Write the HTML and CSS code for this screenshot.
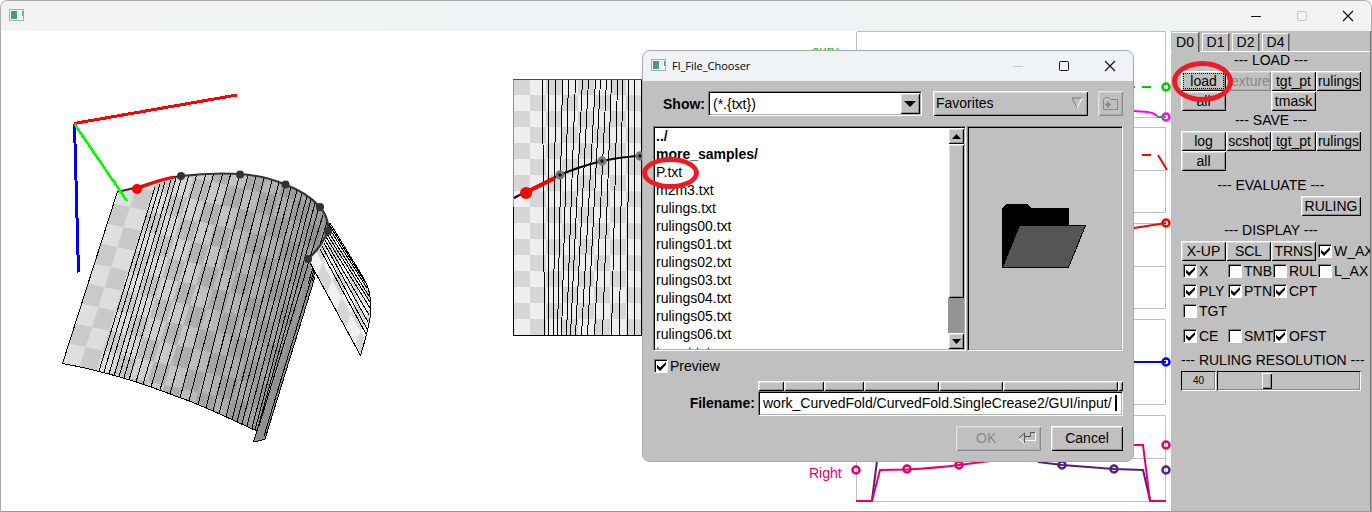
FILE: index.html
```html
<!DOCTYPE html>
<html lang="en">
<head>
<meta charset="utf-8">
<title>Curved Fold</title>
<link rel="stylesheet" href="styles.css">
</head>
<body>
<div class="window">
  <header class="titlebar">
    <svg class="app-icon" width="15" height="12" viewBox="0 0 15 12"><defs><linearGradient id="ic" x2="1" y2="1"><stop offset="0" stop-color="#4a86a8"/><stop offset="1" stop-color="#4ba57c"/></linearGradient></defs><rect width="15" height="12" fill="#a9acaf"/><rect x="1" y="1" width="13" height="10" fill="#fff"/><rect x="2" y="2" width="6" height="8" fill="url(#ic)"/><rect x="9" y="2" width="3" height="8" fill="#eceef0"/><rect x="13" y="2" width="1" height="5" fill="#4a9a8c"/></svg>
    <div class="window-controls">
      <button class="control" aria-label="Minimize"><svg width="12" height="12" viewBox="0 0 12 12"><path d="M1 6.5h10" stroke="#111"/></svg></button>
      <button class="control" aria-label="Maximize" disabled><svg width="12" height="12" viewBox="0 0 12 12"><rect x="1.5" y="1.5" width="9" height="9" rx="1" fill="none" stroke="#c4c6c7"/></svg></button>
      <button class="control" aria-label="Close"><svg width="12" height="12" viewBox="0 0 12 12"><path d="M1 1l10 10M11 1L1 11" stroke="#111" stroke-width="1.2"/></svg></button>
    </div>
  </header>

  <div class="workspace">
    <main class="canvas">
      <svg class="scene" viewBox="1 31 1170 480" preserveAspectRatio="xMinYMin meet">
        <defs>
          <linearGradient id="shade" gradientUnits="userSpaceOnUse" x1="90" y1="270" x2="290" y2="330">
            <stop offset="0" stop-color="#cacaca"/><stop offset=".22" stop-color="#c8c8c8"/><stop offset=".5" stop-color="#b0b0b0"/><stop offset=".85" stop-color="#999"/><stop offset="1" stop-color="#909090"/>
          </linearGradient>
          <linearGradient id="fade" gradientUnits="userSpaceOnUse" x1="90" y1="270" x2="290" y2="330">
            <stop offset="0" stop-color="#fff"/><stop offset=".5" stop-color="#aaa"/><stop offset="1" stop-color="#333"/>
          </linearGradient>
          <mask id="fade-mask" maskUnits="userSpaceOnUse" x="50" y="160" width="290" height="290"><rect x="50" y="160" width="290" height="290" fill="url(#fade)"/></mask>
          <pattern id="skew-check" width="2" height="2" patternUnits="userSpaceOnUse" patternTransform="matrix(17 3.6 -6.3 20 62.5 363.5)"><path d="M0 1h1v1h-1zM1 0h1v1h-1z" fill="#fff" fill-opacity=".42"/></pattern>
          <pattern id="wing-check" width="2" height="2" patternUnits="userSpaceOnUse" patternTransform="matrix(5 -13 9.5 17 308 259)"><path d="M0 0h1v1h-1zM1 1h1v1h-1z" fill="#f1f1f1"/></pattern>
          <pattern id="check" width="32" height="32" patternUnits="userSpaceOnUse" x="514" y="79"><path d="M16 0h16v16h-16zM0 16h16v16h-16z" fill="#eee"/></pattern>
        </defs>

        <!-- folded sheet -->
        <g stroke-linejoin="round" shape-rendering="crispEdges">
          <path d="M117.5 191.5C135 190 160 178 181 176C205 173 225 173 240 174C255 175 272 179 285 184.500C300 190 313 199 320 207C326 214 329 222 328 231C323 243 316 252 308 259L315 277L265 439L262 440L253.500 442L257 431C230 419 200 404 178 397C150 386 110 372 62.500 363.500Z" fill="url(#shade)"/>
          <path d="M117.5 191.5C135 190 160 178 181 176C205 173 225 173 240 174C255 175 272 179 285 184.500C300 190 313 199 320 207L328 231L308 259L313 275L257 431C230 419 200 404 178 397C150 386 110 372 62.500 363.500Z" fill="url(#skew-check)" mask="url(#fade-mask)"/>
          <path d="M117.500 191.500L62.500 363.500C110 372 150 386 178 397C200 404 230 419 257 431L253.500 442L262 440L265 439L315 277M155 187L99 371M160 184L104 372M165 182L109 374M171 180L114 376M176 178L119 377M182 176L124 378M189 175L129 380M197 174L136 382M206 174L143 384M214 173L151 387M223 173L160 390M231 173L170 394M240 174L180 398M248 175L189 401M256 176L198 405M264 178L206 408M272 180L213 411M279 182L219 414M285 185L226 417M291 187L232 420M297 190L237 422M302 193L242 424M307 196L247 426M311 199L252 428M315 203L255 430M319 207L257 431M323 215L259 426M327 222L308 284M328 231L312 281M314 270L264 436" fill="none" stroke="#000"/>
          <path d="M308 259C316 252 323 243 328 231L330 223L363 277C368 285 371 296 371 309C370 326 365 340 360.500 355.500Z" fill="#d5d5d5"/>
          <path d="M308 259C316 252 323 243 328 231L330 223L363 277C368 285 371 296 371 309C370 326 365 340 360.500 355.500Z" fill="url(#wing-check)" stroke="#000"/>
          <path d="M320 249L366 334M322 246L367 329M324 243L368 322M325 240L369 315M326 237L370 308M327 234L370 302M328 231L369 296M329 228L367 288M330 226L365 282" stroke="#000" fill="none"/>
        </g>
        <path d="M117.500 191.500C135 190 160 178 181 176C205 173 225 173 240 174C255 175 272 179 285 184.500C300 190 313 199 320 207C326 214 329 222 328 231C323 243 316 252 308 259" fill="none" stroke="#333" stroke-width="2"/>
        <path d="M137 189Q155 181 174 177" fill="none" stroke="#f00" stroke-width="3"/>
        <g fill="#333"><circle cx="181" cy="176" r="4"/><circle cx="240" cy="174.500" r="4"/><circle cx="285.500" cy="184.500" r="4"/><circle cx="320" cy="207" r="4"/><circle cx="328" cy="231" r="4"/><circle cx="308" cy="259" r="4"/></g>
        <circle cx="137" cy="189" r="5" fill="#f00"/>
        <g fill="none" stroke-width="3" shape-rendering="crispEdges"><path d="M74 123.500L237 95" stroke="#f00"/><path d="M74.500 124L78.500 272.500" stroke="#00f"/><path d="M74.500 124L127 201" stroke="#0f0" stroke-width="2.500"/></g>

        <!-- crease pattern -->
        <g shape-rendering="crispEdges">
          <rect x="513" y="79" width="132" height="256" fill="#d6d6d6"/><rect x="513" y="79" width="132" height="256" fill="url(#check)"/>
          <path d="M542.500 80L544.500 335M548.500 80V335M555.500 80L553.500 335M562.500 80L557.500 335M568.500 80L561.500 335M575.500 80L566.500 335M582.500 80L570.500 335M588.500 80L575.500 335M595.500 80L581.500 335M600.500 80L587.500 335M606.500 80L594.500 335M611.500 80L602.500 335M617.500 80L611.500 335M622.500 80L619.500 335M628.500 80L627.500 335M634.500 80V335M641.500 80V335" fill="none" stroke="#000"/>
          <path d="M513.500 207V335.500H645" fill="none" stroke="#000"/><path d="M513.500 207V79" stroke="#0f0"/><path d="M513 79.500H645" stroke="#f00"/>
        </g>
        <path d="M514 198Q540 184 560 175Q578 167 602 161Q620 157 643 155.500" fill="none" stroke="#000" stroke-width="2"/>
        <path d="M526 192.500L555 178" stroke="#f00" stroke-width="4"/>
        <g fill="#111" stroke="#777" stroke-width="3"><circle cx="560" cy="175" r="3.200"/><circle cx="602" cy="161" r="3.200"/><circle cx="640" cy="156" r="3.200"/></g>
        <circle cx="526" cy="193" r="6" fill="#f00"/><circle cx="526" cy="193" r="1" fill="#700"/>

        <!-- curvature and angle graphs -->
        <g fill="none" stroke="#c0c0c0" shape-rendering="crispEdges">
          <path d="M856.500 31.500H1165.500V117M856.500 117H1166M856.500 31.500V117" /><path d="M856.500 127.500H1165.500V212.500H856.500ZM856 170.500H1166M856.500 223.500H1165.500V308.500H856.500ZM856 266.500H1166M856.500 319.500H1165.500V404.500H856.500ZM856.500 415.500H1165.500V501.500H856.500ZM856 458.500H1166"/>
        </g>
        <g fill="none" stroke-width="2">
          <path d="M1133 87H1135M1142 87H1151" stroke="#00c800"/><circle cx="1166" cy="87" r="3.500" stroke="#00c800" stroke-width="2.500"/>
          <path d="M1134 111L1148 112Q1154 113 1157 116" stroke="#f0f"/><circle cx="1166" cy="117" r="3.500" stroke="#f0f" stroke-width="2.500"/><path d="M1157 117H1166" stroke="#00c800"/>
          <path d="M1142 155H1151M1158 155L1167 170M1134 228L1166 223" stroke="#f00"/><circle cx="1166" cy="223" r="3.500" stroke="#f00" stroke-width="2.500"/>
          <path d="M1134 362H1166" stroke="#00f"/><circle cx="1166" cy="362" r="3.500" stroke="#00f" stroke-width="2.500"/>
          <g stroke="#551e7e"><path d="M872 500L877 461M1038 462L1062 465L1114 469L1143 470L1150 500"/><g stroke-width="2.500"><circle cx="1062" cy="465" r="3.500"/><circle cx="1114" cy="469" r="3.500"/><circle cx="1166" cy="470" r="3.500"/></g></g>
          <g stroke="#e6006e"><path d="M856 501H872L880 470L907 469.500Q935 468 959 465L990 461M1134 445H1143L1150 501H1166"/><g stroke-width="2.500"><circle cx="856" cy="470" r="3.500"/><circle cx="907" cy="469" r="3.500"/><circle cx="959" cy="465" r="3.500"/><circle cx="1166" cy="445" r="3.500"/></g></g>
        </g>
        <text class="graph-label" x="812" y="56" fill="#00c800">curv</text>
        <text class="graph-label" x="809" y="478" fill="#e6006e">Right</text>
      </svg>

      <section class="dialog" role="dialog" aria-label="Fl_File_Chooser">
        <header class="titlebar dialog-titlebar">
          <svg class="app-icon" width="15" height="12" viewBox="0 0 15 12"><rect width="15" height="12" fill="#a9acaf"/><rect x="1" y="1" width="13" height="10" fill="#fff"/><rect x="2" y="2" width="6" height="8" fill="url(#ic)"/><rect x="9" y="2" width="3" height="8" fill="#eceef0"/><rect x="13" y="2" width="1" height="5" fill="#4a9a8c"/></svg>
          <h1 class="dialog-title">Fl_File_Chooser</h1>
          <div class="window-controls">
            <button class="control" aria-label="Minimize" disabled><svg width="12" height="12" viewBox="0 0 12 12"><path d="M1 6.500h10" stroke="#c4c6c7"/></svg></button>
            <button class="control" aria-label="Maximize"><svg width="12" height="12" viewBox="0 0 12 12"><rect x="1.500" y="1.500" width="9" height="9" rx="1" fill="none" stroke="#111"/></svg></button>
            <button class="control" aria-label="Close"><svg width="12" height="12" viewBox="0 0 12 12"><path d="M1 1l10 10M11 1L1 11" stroke="#111" stroke-width="1.200"/></svg></button>
          </div>
        </header>
        <form class="chooser">
          <div class="filter-row">
            <label class="field-label show-label" for="show">Show:</label>
            <div class="select-box sunken">
              <select id="show" class="select"><option>(*.{txt})</option></select>
              <span class="select-arrow raised"><svg width="12" height="6" viewBox="0 0 12 6"><path d="M0 0h12L6 6z"/></svg></span>
            </div>
            <button type="button" class="raised favorites">Favorites <svg width="12" height="12" viewBox="0 0 12 12" fill="none"><path d="M6 11L1 1H11" stroke="#777"/><path d="M11 1L6 11" stroke="#fff"/></svg></button>
            <button type="button" class="raised inactive new-folder" aria-label="New folder" disabled><svg width="17" height="15" viewBox="0 0 17 15" fill="none" stroke="#888"><path d="M1.500 3.500L3.500 1.500H6.500L8.500 3.500H15.500V13.500H1.500Z"/><path d="M3 8.500H9M6 5.500V11.500" stroke-width="2"/></svg></button>
          </div>
          <div class="browser-row">
            <div class="browser sunken">
              <ul class="files">
                <li class="folder">../</li><li class="folder">more_samples/</li><li>P.txt</li><li>m2m3.txt</li><li>rulings.txt</li><li>rulings00.txt</li><li>rulings01.txt</li><li>rulings02.txt</li><li>rulings03.txt</li><li>rulings04.txt</li><li>rulings05.txt</li><li>rulings06.txt</li><li>target.txt</li>
              </ul>
              <div class="scrollbar">
                <button type="button" class="raised scroll-step" aria-label="Scroll up"><svg width="9" height="5" viewBox="0 0 9 5"><path d="M0 5h9L4.500 0z"/></svg></button>
                <div class="raised scroll-thumb"></div>
                <div class="scroll-space"></div>
                <button type="button" class="raised scroll-step" aria-label="Scroll down"><svg width="9" height="5" viewBox="0 0 9 5"><path d="M0 0h9L4.500 5z"/></svg></button>
              </div>
            </div>
            <div class="preview sunken">
              <svg width="84" height="64" viewBox="0 0 84 64" shape-rendering="crispEdges"><path d="M0 64V4L4 0H26L29 4H67V22H50V63Z"/><path d="M17.500 21.500H83.500L66.500 63.500H0.500Z" fill="#555" stroke="#000"/></svg>
            </div>
          </div>
          <label class="check preview-check"><input type="checkbox" checked>Preview</label>
          <div class="file-grid">
            <label class="field-label" for="filename">Filename:</label>
            <div class="filename">
              <div class="path-bar"><button type="button" class="raised seg-a" aria-label="Path level 1"></button><button type="button" class="raised seg-b" aria-label="Path level 2"></button><button type="button" class="raised seg-b" aria-label="Path level 3"></button><button type="button" class="raised seg-c" aria-label="Path level 4"></button><button type="button" class="raised seg-d" aria-label="Path level 5"></button><button type="button" class="raised seg-e" aria-label="Path level 6"></button><span class="raised seg-end"></span></div>
              <div class="sunken file-field"><input id="filename" class="file-input" type="text" value="work_CurvedFold/CurvedFold.SingleCrease2/GUI/input/"><span class="caret"></span></div>
            </div>
          </div>
          <div class="actions">
            <button type="button" class="raised inactive ok" disabled>OK <svg width="18" height="14" viewBox="0 0 18 14" fill="none"><path d="M1 7.500L6.500 12.500V9.500H17.500V1.500" stroke="#fff"/><path d="M6.500 12V2L1 7M6.500 5.500H12.500V1.500H17" stroke="#555"/></svg></button>
            <button type="button" class="raised cancel">Cancel</button>
          </div>
        </form>
        <span class="marker marker-file"></span>
      </section>
    </main>

    <aside class="panel">
      <nav class="tabs"><button class="tab active">D0</button><button class="tab">D1</button><button class="tab">D2</button><button class="tab">D4</button></nav>
      <div class="tools">
        <h2 class="group-title">--- LOAD ---</h2>
        <div class="grid"><button class="raised tool focused">load</button><button class="raised inactive tool" disabled>texture</button><button class="raised tool">tgt_pt</button><button class="raised tool">rulings</button><button class="raised tool">all</button><button class="raised tool third">tmask</button></div>
        <h2 class="group-title">--- SAVE ---</h2>
        <div class="grid"><button class="raised tool">log</button><button class="raised tool">scshot</button><button class="raised tool">tgt_pt</button><button class="raised tool">rulings</button><button class="raised tool">all</button></div>
        <h2 class="group-title spaced">--- EVALUATE ---</h2>
        <button class="raised tool ruling">RULING</button>
        <h2 class="group-title spaced">--- DISPLAY ---</h2>
        <div class="grid">
          <button class="raised tool">X-UP</button><button class="raised tool">SCL</button><button class="raised tool">TRNS</button><label class="check"><input type="checkbox" checked>W_AX</label>
          <label class="check"><input type="checkbox" checked>X</label><label class="check"><input type="checkbox">TNB</label><label class="check"><input type="checkbox">RUL</label><label class="check"><input type="checkbox">L_AX</label>
          <label class="check"><input type="checkbox" checked>PLY</label><label class="check"><input type="checkbox" checked>PTN</label><label class="check"><input type="checkbox" checked>CPT</label>
          <label class="check first"><input type="checkbox">TGT</label>
        </div>
        <div class="grid spaced"><label class="check"><input type="checkbox" checked>CE</label><label class="check"><input type="checkbox">SMT</label><label class="check"><input type="checkbox" checked>OFST</label></div>
        <h2 class="group-title spaced" id="res-title">--- RULING RESOLUTION ---</h2>
        <div class="slider-row"><output class="slider-value" for="resolution">40</output><input id="resolution" class="slider" type="range" min="0" max="120" value="40" aria-labelledby="res-title"></div>
      </div>
      <span class="marker marker-load"></span>
    </aside>
  </div>
</div>
</body>
</html>
```
FILE: styles.css
```css
* { box-sizing: border-box; }
body { margin: 0; background: #fff; color: #000; font: 14px/20px "Liberation Sans", Arial, sans-serif; }
button, input, select { font: inherit; color: inherit; margin: 0; padding: 0; border: 0; border-radius: 0; }
button { background: #c0c0c0; }
h1, h2 { margin: 0; font-weight: normal; }
svg { display: block; flex: none; }

.window { display: flex; flex-direction: column; min-height: 100vh; border: 1px solid #aaa; border-bottom-color: #999; border-top-left-radius: 8px; border-top-right-radius: 8px; overflow: hidden; }
.titlebar { display: flex; align-items: center; height: 30px; padding-left: 8px; background: linear-gradient(90deg, #f1f4f2, #eef3f5 35%, #eef3f5 60%, #f2f3f2); }
.titlebar .app-icon { margin-bottom: 2px; }
.window-controls { display: flex; height: 100%; margin-left: auto; }
.control { display: flex; align-items: center; justify-content: center; width: 46px; background: transparent; }
.workspace { display: flex; flex: 1; }
.canvas { position: relative; flex: 1; min-width: 0; background: #fff; }
.scene { width: 100%; }
.graph-label { font-size: 14px; }

.raised { background: #c0c0c0; box-shadow: inset 1px 1px #fff, inset -1px -1px #000, inset 2px 2px #dedede, inset -2px -2px #909090; }
.sunken { border: 1px solid; border-color: #808080 #fff #fff #808080; box-shadow: inset 1px 1px #000, inset -1px -1px #b0b0b0; }
.raised.inactive { color: #888; box-shadow: inset 1px 1px #e4e4e4, inset -1px -1px #888, inset 2px 2px #cecece, inset -2px -2px #aaa; }

.dialog { position: absolute; left: 641px; top: 19px; width: 492px; border: 1px solid #aaa; border-radius: 8px; background: #c0c0c0; }
.dialog-titlebar { border-radius: 7px 7px 0 0; background: #eff3f5; }
.dialog-title { margin-left: 6px; font: 11px/20px "Open Sans", "Noto Sans", sans-serif; }
.chooser { display: flex; flex-direction: column; padding: 10px; }
.field-label { font-weight: bold; text-align: right; }
.filter-row { display: flex; align-items: center; height: 25px; }
.show-label { width: 52px; margin-right: 3px; line-height: 24px; }
.select-box { display: flex; width: 214px; height: 25px; padding: 1px; background: #fff; }
.select { flex: 1; min-width: 0; padding-left: 3px; background: transparent; appearance: none; }
.select-arrow { display: flex; align-items: center; justify-content: center; width: 20px; }
.favorites { display: flex; align-items: center; justify-content: space-between; width: 155px; height: 25px; margin-left: 11px; padding: 0 5px 2px 3px; }
.new-folder { display: flex; align-items: center; justify-content: center; width: 25px; height: 25px; margin-left: auto; }
.browser-row { display: flex; gap: 1px; height: 225px; margin-top: 10px; }
.browser { display: flex; width: 313px; padding: 1px; background: #fff; }
.files { flex: 1; margin: -1px 0 0; padding: 0 0 0 1px; overflow: hidden; list-style: none; line-height: 18px; }
.folder { font-weight: bold; }
.scrollbar { display: flex; flex-direction: column; width: 16px; background: #949494; }
.scroll-step { display: flex; align-items: center; justify-content: center; height: 16px; }
.scroll-thumb { flex: 156; }
.scroll-space { flex: 35; }
.preview { display: flex; flex: 1; align-items: center; justify-content: center; }
.preview svg { margin: 0 3px 6px 0; }

.check { display: flex; align-items: center; height: 20px; padding-left: 2px; gap: 2px; white-space: nowrap; }
.check input { flex: none; width: 14px; height: 14px; appearance: none; background: #fff; border: 1px solid; border-color: #808080 #fff #fff #808080; box-shadow: inset 1px 1px #000; }
.check input:checked::after { content: ""; display: block; width: 9px; height: 9px; margin: 2px 0 0 2px; background: #000; clip-path: polygon(0 30%, 35% 62%, 100% 0, 100% 30%, 35% 100%, 0 66%); }
.preview-check { align-self: flex-start; margin-top: 5px; padding-left: 1px; }
.file-grid { display: flex; align-items: flex-end; margin-top: 5px; gap: 3px; }
.file-grid .field-label { width: 102px; padding-bottom: 2px; line-height: 22px; }
.filename { flex: 1; min-width: 0; }
.path-bar { display: flex; height: 10px; }
.seg-a { flex: 26; } .seg-b { flex: 40; } .seg-c { flex: 75; } .seg-d { flex: 64; } .seg-e { flex: 115; } .seg-end { flex: 5; }
.file-field { display: flex; align-items: center; height: 25px; padding: 0 4px 2px; background: #fff; }
.file-input { flex: 0 1 352px; min-width: 0; background: transparent; outline: 0; }
.caret { flex: none; width: 2px; height: 16px; background: #000; }
.actions { display: flex; justify-content: flex-end; gap: 10px; margin-top: 10px; }
.ok { display: flex; align-items: center; justify-content: space-between; width: 85px; height: 25px; padding: 0 5px 2px 20px; }
.cancel { width: 72px; height: 25px; padding-bottom: 2px; }

.panel { position: relative; width: 200px; flex: none; overflow: hidden; background: #c0c0c0; border-right: 1px solid #777; }
.tabs { display: flex; align-items: flex-end; gap: 3px; height: 21px; padding-left: 1px; border-bottom: 1px solid #fff; }
.tab { width: 27px; height: 18px; line-height: 17px; border-top: 1px solid #fff; border-left: 1px solid #fff; border-right: 1px solid #555; box-shadow: 1px 0 #909090; }
.tab.active { height: 20px; border-left: 0; margin-bottom: -1px; }
.tools { width: 190px; padding-left: 10px; }
.group-title { font-size: 14px; height: 20px; line-height: 18px; text-align: center; white-space: nowrap; }
.grid { display: grid; grid-template-columns: repeat(4, 45px); grid-auto-rows: 20px; }
.spaced { margin-top: 5px; }
.tools { margin-top: -1px; }
.tool { display: flex; align-items: center; justify-content: center; height: 20px; overflow: hidden; white-space: nowrap; }
.focused { outline: 1px dotted #000; outline-offset: -3px; }
.third { grid-column: 3; }
.first { grid-column: 1; }
.ruling { width: 60px; margin-left: auto; }
.slider-row { display: flex; gap: 1px; height: 20px; }
.slider-value { width: 35px; border: 1px solid; border-color: #000 #fff #fff #000; box-shadow: inset -1px -1px #888; font-size: 10px; line-height: 18px; text-align: center; }
.slider { flex: 1; min-width: 0; height: 20px; appearance: none; background: #c0c0c0; border: 1px solid; border-color: #000 #fff #fff #000; box-shadow: inset -1px -1px #888; }
.slider::-webkit-slider-thumb { appearance: none; width: 10px; height: 16px; background: #c0c0c0; box-shadow: inset 1px 1px #fff, inset -1px -1px #000, inset -2px -2px #909090; }

.marker { position: absolute; border: 5px solid #ed1c24; border-radius: 50%; pointer-events: none; }
.marker-file { left: -1px; top: 106px; width: 57px; height: 32px; }
.marker-load { left: 1px; top: 30px; width: 61px; height: 41px; }
```
